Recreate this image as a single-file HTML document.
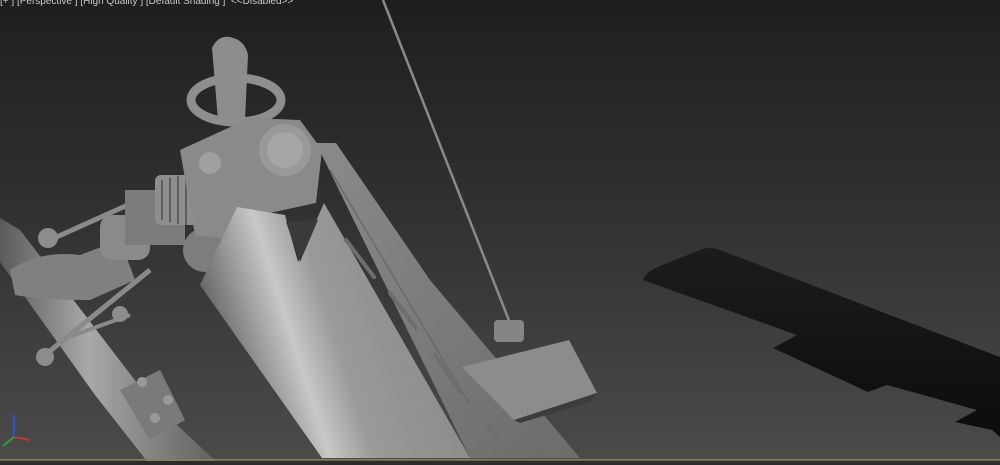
<!DOCTYPE html>
<html><head><style>
html,body{margin:0;padding:0;width:1000px;height:465px;overflow:hidden;background:#333}
.t{position:absolute;left:0;top:-4px;font:10px "Liberation Sans",sans-serif;color:#c8c8c8;white-space:pre}
</style></head><body>
<svg width="1000" height="465" style="position:absolute;left:0;top:0">
<defs>
<linearGradient id="bg" x1="0" y1="0" x2="0" y2="1">
<stop offset="0" stop-color="#1e1e1e"/><stop offset="0.5" stop-color="#333"/><stop offset="1" stop-color="#4b4b4b"/></linearGradient>
<linearGradient id="front" x1="0" y1="0.3" x2="1" y2="0">
<stop offset="0" stop-color="#6a6a6a"/><stop offset="0.25" stop-color="#c8c8c8"/><stop offset="0.4" stop-color="#9a9a9a"/><stop offset="1" stop-color="#828282"/></linearGradient>
<linearGradient id="side" x1="0" y1="0" x2="1" y2="1">
<stop offset="0" stop-color="#8a8a8a"/><stop offset="1" stop-color="#6c6c6c"/></linearGradient>
<linearGradient id="tube" x1="0" y1="0" x2="1" y2="0">
<stop offset="0" stop-color="#5a5a5a"/><stop offset="0.4" stop-color="#a8a8a8"/><stop offset="1" stop-color="#5e5e5e"/></linearGradient>
<linearGradient id="wing" x1="0" y1="0" x2="0" y2="1">
<stop offset="0" stop-color="#1c1c1c"/><stop offset="1" stop-color="#0c0c0c"/></linearGradient>
</defs>
<rect width="1000" height="465" fill="url(#bg)"/>
<path d="M643,280 Q645,272 660,266 L700,250 Q710,246 720,250 L1000,357 L1000,437 L992,430 L955,422 L977,410 L887,385 L868,392 L773,348 L797,335 Z" fill="url(#wing)"/>
<line x1="383" y1="0" x2="510" y2="323" stroke="#8a8a8a" stroke-width="2.5"/>
<path d="M0,218 L20,230 L150,400 L220,465 L150,465 L95,395 L0,262 Z" fill="url(#tube)"/>
<path d="M120,390 L160,370 L185,420 L150,440 Z" fill="#7a7a7a"/>
<circle cx="142" cy="382" r="5" fill="#999"/><circle cx="168" cy="400" r="5" fill="#999"/><circle cx="155" cy="418" r="5" fill="#999"/>
<path d="M10,270 Q40,250 80,255 L120,240 L135,280 L90,300 Q40,300 15,295 Z" fill="#808080"/>
<line x1="50" y1="240" x2="150" y2="195" stroke="#8a8a8a" stroke-width="5"/>
<line x1="45" y1="355" x2="150" y2="270" stroke="#8a8a8a" stroke-width="5"/>
<line x1="60" y1="340" x2="130" y2="315" stroke="#8a8a8a" stroke-width="4"/>
<circle cx="48" cy="238" r="10" fill="#8c8c8c"/><circle cx="45" cy="357" r="9" fill="#8c8c8c"/><circle cx="120" cy="314" r="8" fill="#8c8c8c"/>
<rect x="100" y="215" width="50" height="45" rx="12" fill="#8a8a8a"/>
<rect x="125" y="190" width="60" height="55" fill="#7c7c7c"/>
<rect x="155" y="175" width="60" height="50" rx="6" fill="#8e8e8e"/>
<g stroke="#5e5e5e" stroke-width="2"><line x1="162" y1="180" x2="162" y2="220"/><line x1="170" y1="178" x2="170" y2="222"/><line x1="178" y1="176" x2="178" y2="224"/><line x1="186" y1="175" x2="186" y2="225"/></g>
<ellipse cx="205" cy="250" rx="22" ry="22" fill="#7d7d7d"/>
<path d="M212,48 Q218,35 230,37 Q245,40 248,55 L245,120 L218,120 Z" fill="#8c8c8c"/>
<ellipse cx="236" cy="100" rx="45" ry="22" fill="none" stroke="#8e8e8e" stroke-width="9"/>
<path d="M180,150 L250,118 L300,120 L322,150 L316,203 L260,215 L235,240 L195,235 Z" fill="#8a8a8a"/>
<circle cx="285" cy="150" r="26" fill="#999"/><circle cx="285" cy="150" r="18" fill="#a6a6a6"/>
<circle cx="210" cy="163" r="11" fill="#a0a0a0"/>
<path d="M316,143 L336,143 L430,280 L580,458 L470,458 Z" fill="url(#side)"/>
<path d="M237,207 L285,215 L298,262 L324,203 L470,458 L322,458 L200,285 Z" fill="url(#front)"/>
<path d="M286,222 L300,262 L318,220 Z" fill="#3a3a3a"/>
<g stroke="#6e6e6e" stroke-width="4" stroke-linecap="round">
<line x1="346" y1="240" x2="374" y2="277"/><line x1="390" y1="293" x2="416" y2="328"/><line x1="435" y1="355" x2="460" y2="392"/><line x1="488" y1="425" x2="500" y2="440"/></g>
<line x1="330" y1="170" x2="470" y2="405" stroke="#6a6a6a" stroke-width="1.5"/>
<rect x="494" y="320" width="30" height="22" rx="4" fill="#858585"/>
<path d="M462,367 L569,340 L597,393 L514,420 Z" fill="#8c8c8c"/>
<path d="M514,420 L597,393 L590,402 L520,423 Z" fill="#3c3c3c"/>
<line x1="14" y1="437" x2="14" y2="415" stroke="#3050d0" stroke-width="2"/>
<line x1="14" y1="437" x2="30" y2="440" stroke="#d03030" stroke-width="2"/>
<line x1="14" y1="437" x2="3" y2="446" stroke="#30a030" stroke-width="2"/>
<rect x="0" y="459" width="1000" height="1.5" fill="#8a8040"/>
<rect x="0" y="461" width="1000" height="4" fill="#2c2c2c"/>
</svg>
<div class="t">[+ ] [Perspective ] [High Quality ] [Default Shading ]  &lt;&lt;Disabled&gt;&gt;</div>
</body></html>
